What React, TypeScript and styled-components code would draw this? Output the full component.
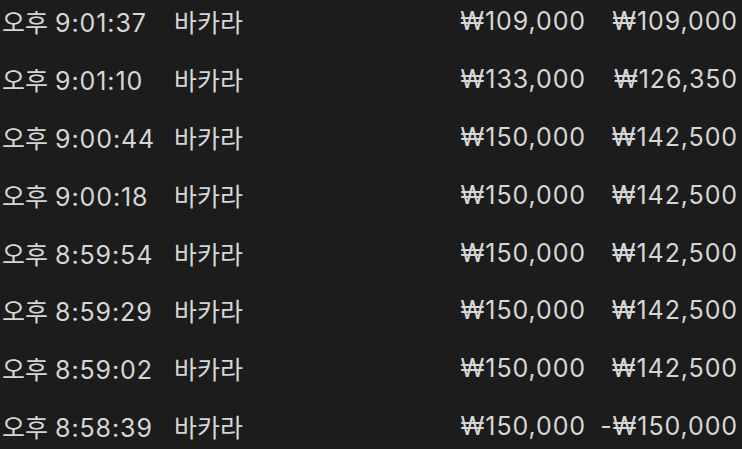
import React from 'react';
import styled, { createGlobalStyle } from 'styled-components';

const GlobalStyle = createGlobalStyle`
  html, body {
    margin: 0;
    padding: 0;
    background: #1c1c1c;
    overflow: hidden;
  }
`;

interface Bet {
  time: string;
  game: string;
  stake: string;
  payout: string;
}

const bets: Bet[] = [
  { time: '오후 9:01:37', game: '바카라', stake: '₩109,000', payout: '₩109,000' },
  { time: '오후 9:01:10', game: '바카라', stake: '₩133,000', payout: '₩126,350' },
  { time: '오후 9:00:44', game: '바카라', stake: '₩150,000', payout: '₩142,500' },
  { time: '오후 9:00:18', game: '바카라', stake: '₩150,000', payout: '₩142,500' },
  { time: '오후 8:59:54', game: '바카라', stake: '₩150,000', payout: '₩142,500' },
  { time: '오후 8:59:29', game: '바카라', stake: '₩150,000', payout: '₩142,500' },
  { time: '오후 8:59:02', game: '바카라', stake: '₩150,000', payout: '₩142,500' },
  { time: '오후 8:58:39', game: '바카라', stake: '₩150,000', payout: '-₩150,000' },
];

const List = styled.div`
  width: 742px;
  height: 449px;
  background: #1c1c1c;
  color: #d6d6d6;
  font-family: Inter, 'Noto Sans CJK KR', sans-serif;
  font-size: 25px;
  padding: 0 4px 0 2px;
  box-sizing: border-box;
  margin-top: -8px;
`;

const Row = styled.div`
  display: grid;
  grid-template-columns: 172px 1fr auto 152px;
  align-items: center;
  height: 57.9px;
  white-space: nowrap;
`;

const Cell = styled.span<{ $right?: boolean; $num?: boolean }>`
  text-align: ${({ $right }) => ($right ? 'right' : 'left')};
  letter-spacing: ${({ $num }) => ($num ? '0.9px' : '0')};
`;

const Digits = styled.span`
  letter-spacing: 0.9px;
`;

const App: React.FC = () => (
  <>
    <GlobalStyle />
    <List>
      {bets.map((b, i) => {
        const [ampm, clock] = b.time.split(' ');
        return (
          <Row key={i}>
            <Cell>
              {ampm} <Digits>{clock}</Digits>
            </Cell>
            <Cell>{b.game}</Cell>
            <Cell $right $num>{b.stake}</Cell>
            <Cell $right $num>{b.payout}</Cell>
          </Row>
        );
      })}
    </List>
  </>
);

export default App;
